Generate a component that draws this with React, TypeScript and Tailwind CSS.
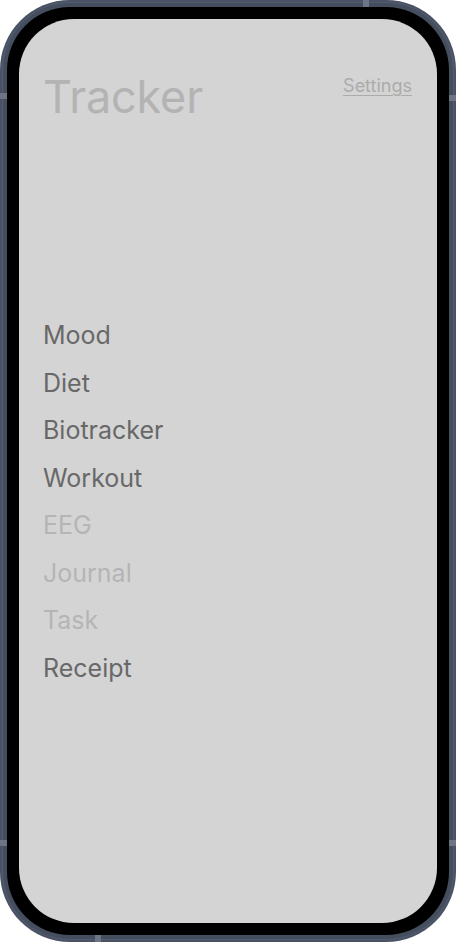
import React from "react";

const items: { label: string; active: boolean }[] = [
  { label: "Mood", active: true },
  { label: "Diet", active: true },
  { label: "Biotracker", active: true },
  { label: "Workout", active: true },
  { label: "EEG", active: false },
  { label: "Journal", active: false },
  { label: "Task", active: false },
  { label: "Receipt", active: true },
];

export default function App() {
  return (
    <div
      className="w-[456px] h-[942px] bg-white"
      style={{ fontFamily: "Inter, 'Noto Sans', sans-serif" }}
    >
      <div className="relative w-full h-full rounded-[70px] bg-[#4a5365] p-[2px]">
        <div className="w-full h-full rounded-[68px] bg-[#535c6d] p-[1px]">
          <div className="w-full h-full rounded-[67px] bg-[#454e5e] p-[4px]">
            <div className="w-full h-full rounded-[63px] bg-black p-[12px]">
              <div className="w-full h-full rounded-[55px] bg-[#d4d4d4] pl-6 pr-[25px] pt-[51px] flex flex-col">
                <div className="flex items-start justify-between">
                  <div className="mt-[4px] text-[45px] leading-none text-[#b3b3b3] tracking-[-0.2px]">
                    Tracker
                  </div>
                  <a className="mt-[2px] text-lg leading-7 text-[#ababab] underline underline-offset-[3px] decoration-[#ababab]">
                    Settings
                  </a>
                </div>
                <div className="mt-[200px] flex flex-col gap-[15.5px]">
                  {items.map((it) => (
                    <div
                      key={it.label}
                      className={
                        it.active
                          ? "text-[25px] leading-8 text-[#686868]"
                          : "text-[25px] leading-8 text-[#b5b5b5]"
                      }
                    >
                      {it.label}
                    </div>
                  ))}
                </div>
              </div>
            </div>
          </div>
        </div>
        <div className="absolute left-0 top-[93px] w-[7px] h-[6px] bg-[#6e7686]" />
        <div className="absolute left-0 top-[840px] w-[7px] h-[6px] bg-[#6e7686]" />
        <div className="absolute right-0 top-[95px] w-[7px] h-[6px] bg-[#6e7686]" />
        <div className="absolute right-0 top-[840px] w-[7px] h-[6px] bg-[#6e7686]" />
        <div className="absolute top-0 left-[363px] w-[6px] h-[7px] bg-[#6e7686]" />
        <div className="absolute bottom-0 left-[95px] w-[6px] h-[7px] bg-[#6e7686]" />
      </div>
    </div>
  );
}
